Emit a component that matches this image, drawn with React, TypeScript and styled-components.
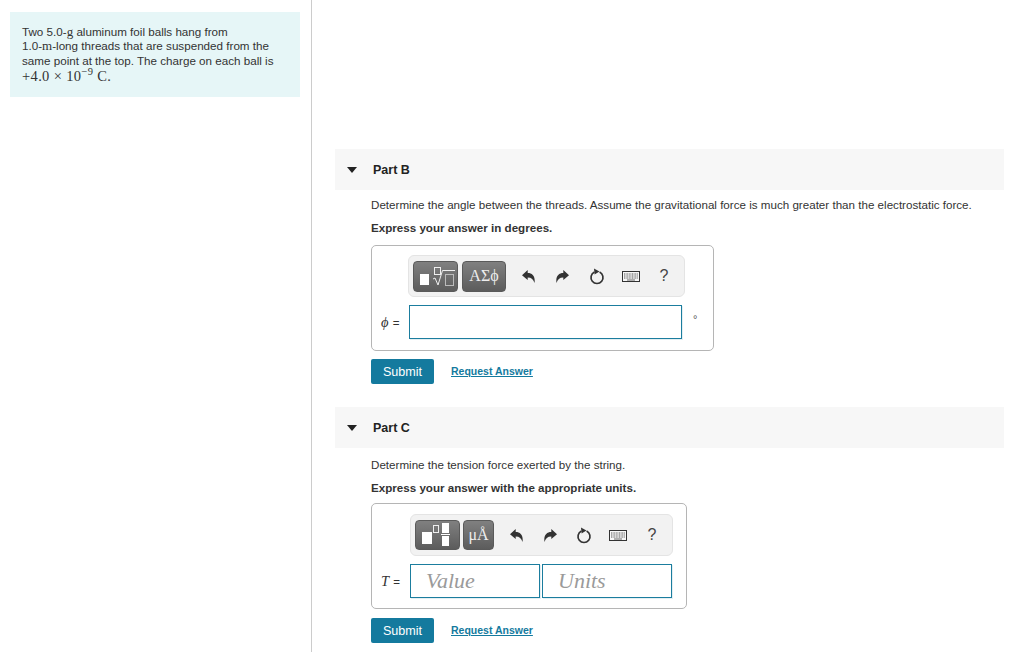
import React from "react";
import styled, { createGlobalStyle } from "styled-components";

const GlobalStyle = createGlobalStyle`
  html, body {
    margin: 0;
    padding: 0;
    background: #fff;
    font-family: "Liberation Sans", Arial, sans-serif;
    color: #222;
  }
`;

const Page = styled.div`
  display: flex;
  width: 1024px;
  height: 652px;
  overflow: hidden;
`;

const Sidebar = styled.aside`
  width: 312px;
  flex: none;
  box-sizing: border-box;
  padding: 12px 11px 0 10px;
  border-right: 1px solid #ccc;
  height: 652px;
`;

const ProblemBox = styled.div`
  box-sizing: border-box;
  height: 85px;
  padding: 13px 12px 0;
  background: #e6f6f7;
  font-size: 11.65px;
  line-height: 14.3px;
  color: #333;
`;

const InlineUnit = styled.span`
  font-family: "Liberation Serif", serif;
  font-size: 13px;
`;

const ChargeLine = styled.div`
  font-family: "Liberation Serif", serif;
  font-size: 14.5px;
  line-height: 17px;
  letter-spacing: 0.35px;
`;

const Sup = styled.sup`
  font-size: 10.5px;
  line-height: 0;
`;

const Main = styled.main`
  flex: 1;
  box-sizing: border-box;
  padding: 149px 20px 0 23px;
`;

const PartHeader = styled.div`
  display: flex;
  align-items: center;
  height: 41px;
  background: #f7f7f7;
  padding-left: 12px;
  font-size: 12.5px;
  font-weight: bold;
  color: #222;
`;

const Caret = styled.span`
  width: 0;
  height: 0;
  margin-right: 16px;
  border-left: 5px solid transparent;
  border-right: 5px solid transparent;
  border-top: 6px solid #222;
`;

const PartBody = styled.section`
  padding-left: 36px;
  margin-bottom: 23px;
`;

const Prompt = styled.p<{ $top: number }>`
  margin: ${(p) => p.$top}px 0 0;
  height: 16px;
  line-height: 16px;
  font-size: 11.62px;
  color: #333;
`;

const Instruction = styled.p`
  margin: 7px 0 0;
  height: 16px;
  line-height: 16px;
  font-size: 11.62px;
  font-weight: bold;
  color: #333;
`;

const AnswerCard = styled.div<{ $width: number; $top: number; $inset: number; $pad: number }>`
  box-sizing: border-box;
  width: ${(p) => p.$width}px;
  height: 106px;
  margin-top: ${(p) => p.$top}px;
  padding: ${(p) => p.$pad}px 0 0 ${(p) => p.$inset}px;
  border: 1px solid #b5b5b5;
  border-radius: 5px;
`;

const Toolbar = styled.div<{ $width: number }>`
  box-sizing: border-box;
  display: flex;
  align-items: center;
  width: ${(p) => p.$width}px;
  height: 42px;
  padding-left: 4px;
  background: #f2f2f2;
  border: 1px solid #e4e4e4;
  border-radius: 6px;
`;

const ToolButton = styled.div<{ $width: number; $gap: number; $height: number }>`
  box-sizing: border-box;
  display: flex;
  align-items: center;
  justify-content: center;
  flex: none;
  width: ${(p) => p.$width}px;
  height: ${(p) => p.$height}px;
  margin-right: ${(p) => p.$gap}px;
  border: 1px solid #5a5a5a;
  border-radius: 4px;
  background: linear-gradient(#808080, #5c5c5c);
  color: #eee;
  font-family: "Liberation Serif", serif;
  font-size: 16px;
`;

const ToolIcon = styled.div<{ $width: number }>`
  display: flex;
  justify-content: center;
  align-items: center;
  flex: none;
  width: ${(p) => p.$width}px;
  color: #444;
  font-size: 16px;
`;

const InputRow = styled.div<{ $offset: number }>`
  display: flex;
  align-items: center;
  height: 34px;
  margin-top: 8px;
  margin-left: ${(p) => p.$offset}px;
`;

const VarLabel = styled.span<{ $width: number }>`
  width: ${(p) => p.$width}px;
  flex: none;
  font-size: 11.6px;
  color: #333;
  i {
    font-family: "Liberation Serif", serif;
    font-size: 14.5px;
    margin-right: 1px;
  }
`;

const AnswerField = styled.div<{ $width: number }>`
  box-sizing: border-box;
  display: flex;
  align-items: center;
  flex: none;
  width: ${(p) => p.$width}px;
  height: 34px;
  margin-right: 2px;
  padding-left: 15px;
  border: 1px solid #1b7d9e;
  box-shadow: 1px 1px 0 rgba(27, 125, 158, 0.12);
  font-family: "Liberation Serif", serif;
  font-style: italic;
  font-size: 22px;
  color: #9a9a9a;
`;

const UnitMark = styled.span`
  margin: -6px 0 0 9px;
  font-size: 11px;
  color: #555;
`;

const Actions = styled.div<{ $top: number }>`
  display: flex;
  align-items: center;
  margin-top: ${(p) => p.$top}px;
  height: 25px;
`;

const SubmitButton = styled.button`
  width: 63px;
  height: 25px;
  padding: 0;
  border: 0;
  border-radius: 2px;
  background: #147a9e;
  color: #fff;
  font-family: inherit;
  font-size: 12.6px;
`;

const RequestLink = styled.a`
  margin-left: 17px;
  padding-bottom: 2px;
  font-size: 10.5px;
  font-weight: bold;
  color: #147a9e;
  text-decoration: underline;
`;

const Undo = ({ flip }: { flip?: boolean }) => (
  <svg width="13" height="13" viewBox="0 0 13 13" style={flip ? { transform: "scaleX(-1)" } : undefined}>
    <path d="M0 5.3 L5.7 0 V3 C10.5 3 13.5 6.5 12.5 13 C11.5 9.5 9.5 7.5 5.7 7.5 V10 Z" fill="#333" />
  </svg>
);

const Reset = () => (
  <svg width="16" height="17" viewBox="0 0 16 17">
    <path d="M5.4 4.1 A6 6 0 1 0 10.6 4.1" fill="none" stroke="#333" strokeWidth="1.7" />
    <path d="M5 0.6 L10.4 3.6 L5.6 6.6 Z" fill="#333" />
  </svg>
);

const Keyboard = () => (
  <svg width="18" height="11" viewBox="0 0 18 11">
    <rect x="0.5" y="0.5" width="17" height="10" fill="#f7f7f7" stroke="#333" />
    <path d="M2 3h14M2 5h14M2 7h14" stroke="#555" strokeWidth="1" strokeDasharray="1 0.6" />
    <path d="M5 9h8" stroke="#666" strokeWidth="1" />
  </svg>
);

const RadicalGlyph = () => (
  <svg width="43" height="29" viewBox="0 0 43 29">
    <rect x="6" y="12" width="9" height="11" fill="#fff" />
    <rect x="20.5" y="5.5" width="6" height="7" fill="none" stroke="#eee" />
    <path d="M19 17 L21 16 L24 23 L28.5 8.5 H41" fill="none" stroke="#eee" strokeWidth="1" />
    <rect x="31.5" y="12.5" width="8" height="11" fill="none" stroke="#bbb" />
  </svg>
);

const FractionGlyph = () => (
  <svg width="43" height="28" viewBox="0 0 43 28">
    <rect x="6" y="11" width="10" height="12" fill="#fff" />
    <rect x="17.5" y="4.5" width="5" height="7" fill="none" stroke="#eee" />
    <rect x="26" y="2" width="7" height="10" fill="#fff" />
    <rect x="25" y="13" width="9" height="1" fill="#fff" />
    <rect x="26" y="15" width="7" height="10" fill="#fff" />
  </svg>
);

const HistoryIcons = ({ widths }: { widths: number[] }) => (
  <>
    <ToolIcon $width={widths[0]}><Undo /></ToolIcon>
    <ToolIcon $width={widths[1]}><Undo flip /></ToolIcon>
    <ToolIcon $width={widths[2]}><Reset /></ToolIcon>
    <ToolIcon $width={widths[3]}><Keyboard /></ToolIcon>
    <ToolIcon $width={widths[4]}>?</ToolIcon>
  </>
);

const AnswerActions = ({ top }: { top: number }) => (
  <Actions $top={top}>
    <SubmitButton>Submit</SubmitButton>
    <RequestLink href="#">Request Answer</RequestLink>
  </Actions>
);

export default function App() {
  return (
    <Page>
      <GlobalStyle />
      <Sidebar>
        <ProblemBox>
          Two 5.0-<InlineUnit>g</InlineUnit> aluminum foil balls hang from
          <br />
          1.0-<InlineUnit>m</InlineUnit>-long threads that are suspended from the
          <br />
          same point at the top. The charge on each ball is
          <ChargeLine>
            +4.0 × 10<Sup>−9</Sup> C.
          </ChargeLine>
        </ProblemBox>
      </Sidebar>
      <Main>
        <PartHeader>
          <Caret />
          Part B
        </PartHeader>
        <PartBody>
          <Prompt $top={7}>Determine the angle between the threads. Assume the gravitational force is much greater than the electrostatic force.</Prompt>
          <Instruction>Express your answer in degrees.</Instruction>
          <AnswerCard $width={343} $top={9} $inset={36} $pad={9}>
            <Toolbar $width={277}>
              <ToolButton $width={45} $height={31} $gap={4}><RadicalGlyph /></ToolButton>
              <ToolButton $width={44} $height={31} $gap={3}>ΑΣϕ</ToolButton>
              <HistoryIcons widths={[38, 30, 40, 27, 40]} />
            </Toolbar>
            <InputRow $offset={-27}>
              <VarLabel $width={28}><i>ϕ</i> =</VarLabel>
              <AnswerField $width={273} />
              <UnitMark>°</UnitMark>
            </InputRow>
          </AnswerCard>
          <AnswerActions top={8} />
        </PartBody>
        <PartHeader>
          <Caret />
          Part C
        </PartHeader>
        <PartBody>
          <Prompt $top={9}>Determine the tension force exerted by the string.</Prompt>
          <Instruction>Express your answer with the appropriate units.</Instruction>
          <AnswerCard $width={316} $top={7} $inset={38} $pad={10}>
            <Toolbar $width={263}>
              <ToolButton $width={45} $height={30} $gap={3}><FractionGlyph /></ToolButton>
              <ToolButton $width={31} $height={30} $gap={3}>μÅ</ToolButton>
              <HistoryIcons widths={[38, 30, 38, 30, 38]} />
            </Toolbar>
            <InputRow $offset={-29}>
              <VarLabel $width={29}><i>T</i> =</VarLabel>
              <AnswerField $width={130}>Value</AnswerField>
              <AnswerField $width={130}>Units</AnswerField>
            </InputRow>
          </AnswerCard>
          <AnswerActions top={9} />
        </PartBody>
      </Main>
    </Page>
  );
}
